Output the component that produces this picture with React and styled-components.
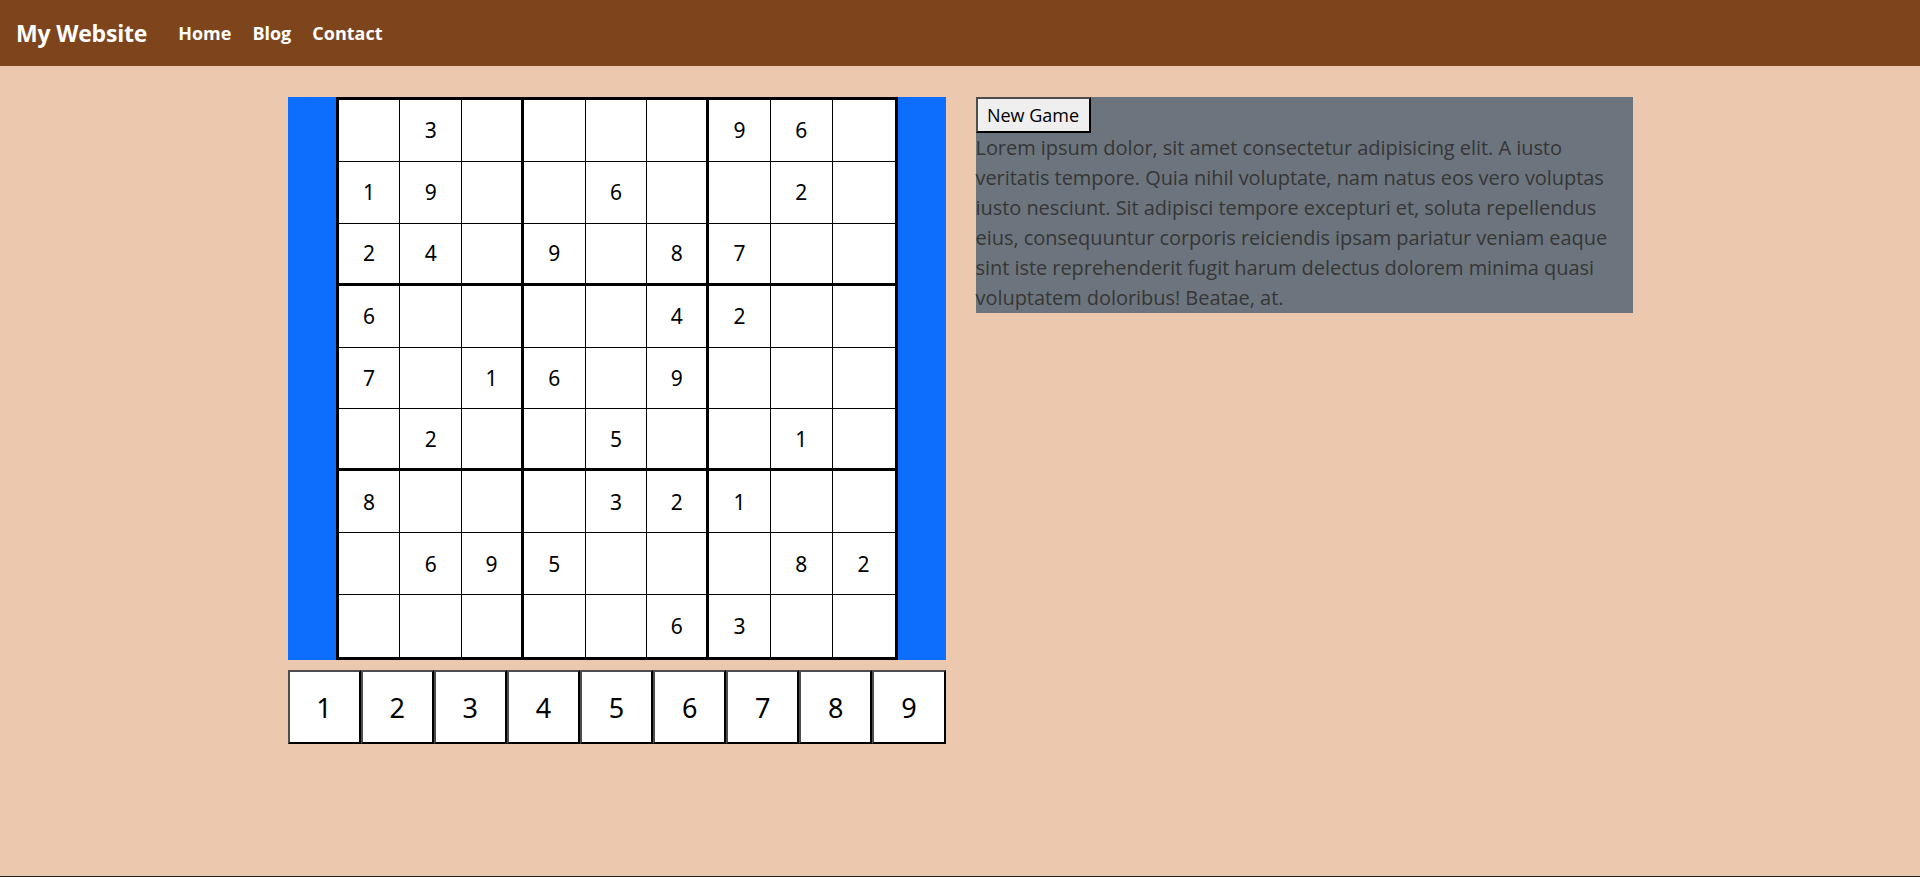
import React from 'react';
import styled, { createGlobalStyle } from 'styled-components';

const puzzle = [
  [0, 3, 0, 0, 0, 0, 9, 6, 0],
  [1, 9, 0, 0, 6, 0, 0, 2, 0],
  [2, 4, 0, 9, 0, 8, 7, 0, 0],
  [6, 0, 0, 0, 0, 4, 2, 0, 0],
  [7, 0, 1, 6, 0, 9, 0, 0, 0],
  [0, 2, 0, 0, 5, 0, 0, 1, 0],
  [8, 0, 0, 0, 3, 2, 1, 0, 0],
  [0, 6, 9, 5, 0, 0, 0, 8, 2],
  [0, 0, 0, 0, 0, 6, 3, 0, 0],
];

const App = () => {
  return (
    <>
      <GlobalStyle />
      <Header>
        <Brand>My Website</Brand>
        <Nav>
          <NavLink href="#">Home</NavLink>
          <NavLink href="#">Blog</NavLink>
          <NavLink href="#">Contact</NavLink>
        </Nav>
      </Header>
      <Main>
        <GameColumn>
          <BoardFrame>
            <Board>
              {puzzle.map((row, r) =>
                row.map((val, c) => (
                  <Cell
                    key={`${r}-${c}`}
                    $right={c === 8 ? 0 : c % 3 === 2 ? 3 : 1}
                    $bottom={r === 8 ? 0 : r % 3 === 2 ? 3 : 1}
                  >
                    {val || ''}
                  </Cell>
                ))
              )}
            </Board>
          </BoardFrame>
          <NumberPad>
            {[1, 2, 3, 4, 5, 6, 7, 8, 9].map((n) => (
              <NumberButton key={n}>{n}</NumberButton>
            ))}
          </NumberPad>
        </GameColumn>
        <InfoPanel>
          <NewGameButton>New Game</NewGameButton>
          <InfoText>
            Lorem ipsum dolor, sit amet consectetur adipisicing elit. A iusto veritatis tempore. Quia
            nihil voluptate, nam natus eos vero voluptas iusto nesciunt. Sit adipisci tempore
            excepturi et, soluta repellendus eius, consequuntur corporis reiciendis ipsam pariatur
            veniam eaque sint iste reprehenderit fugit harum delectus dolorem minima quasi
            voluptatem doloribus! Beatae, at.
          </InfoText>
        </InfoPanel>
      </Main>
      <Footer />
    </>
  );
};

export default App;

const GlobalStyle = createGlobalStyle`
  * { box-sizing: border-box; }
  body {
    margin: 0;
    background: #ecc9ae;
    font-family: "Open Sans", "Liberation Sans", sans-serif;
  }
`;

const Header = styled.header`
  height: 66px;
  background: #7e451c;
  display: flex;
  align-items: center;
  padding: 0 16px;
`;

const Brand = styled.div`
  color: #fff;
  font-size: 23px;
  font-weight: 700;
  letter-spacing: -0.2px;
  margin-right: 31px;
`;

const Nav = styled.nav`
  display: flex;
  gap: 21px;
`;

const NavLink = styled.a`
  color: #fff;
  font-size: 18px;
  font-weight: 700;
  text-decoration: none;
`;

const Main = styled.main`
  display: flex;
  justify-content: center;
  align-items: flex-start;
  gap: 30px;
  padding-top: 31px;
  min-height: calc(877px - 66px - 1px);
`;

const GameColumn = styled.div`
  display: flex;
  flex-direction: column;
  gap: 10px;
  width: 658px;
`;

const BoardFrame = styled.div`
  background: #0d6efd;
  display: flex;
  justify-content: center;
`;

const Board = styled.div`
  display: grid;
  grid-template-columns: repeat(9, 1fr);
  grid-template-rows: repeat(9, 1fr);
  border: 3px solid #000;
  background: #fff;
  width: 562px;
  height: 563px;
`;

const Cell = styled.div`
  border-right: ${(p) => p.$right}px solid #000;
  border-bottom: ${(p) => p.$bottom}px solid #000;
  display: flex;
  align-items: center;
  justify-content: center;
  font-family: "Noto Sans", sans-serif;
  font-size: 21px;
  color: #000;
  background: #fff;
`;

const NumberPad = styled.div`
  display: grid;
  grid-template-columns: repeat(9, 1fr);
  height: 74px;
`;

const NumberButton = styled.button`
  background: #fff;
  border: 2px solid #000;
  border-top-color: #4d4d4d;
  border-left-color: #4d4d4d;
  font-family: "Noto Sans", sans-serif;
  font-size: 27px;
  color: #000;
  padding: 0;
`;

const InfoPanel = styled.div`
  width: 657px;
  background: #6c757d;
`;

const NewGameButton = styled.button`
  display: block;
  background: #efefef;
  border: 2px solid #000;
  border-top-color: #4d4d4d;
  border-left-color: #4d4d4d;
  height: 36px;
  width: 115px;
  padding: 0;
  font-family: "Open Sans", sans-serif;
  font-size: 18px;
  color: #000;
`;

const InfoText = styled.p`
  margin: 0;
  color: #363636;
  font-size: 20px;
  letter-spacing: -0.05px;
  line-height: 30px;
`;

const Footer = styled.footer`
  height: 1px;
  background: #222;
`;
